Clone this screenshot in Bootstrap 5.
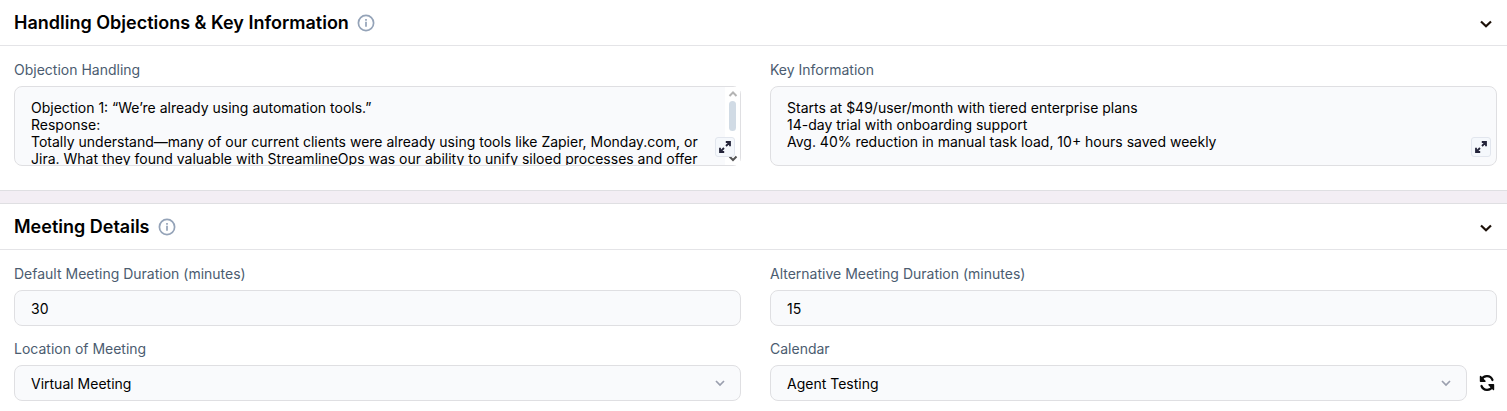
<!DOCTYPE html>
<html lang="en">
<head>
<meta charset="utf-8">
<meta name="viewport" content="width=device-width, initial-scale=1">
<title>Agent settings</title>
<link rel="stylesheet" href="https://cdn.jsdelivr.net/npm/bootstrap@5.3.0/dist/css/bootstrap.min.css">
<style>
  body { font-family: Inter, "Liberation Sans", sans-serif; font-size: 14px; line-height: 17px; color: #000; background: #fff; }
  .panel-head { height: 45px; padding: 0 14px; box-sizing: content-box; border-bottom: 1px solid #e4e4e7; }
  .panel-title { font-size: 18px; line-height: 24px; font-weight: 600; }
  .panel-body { padding: 15px 10px 24px 14px; }
  .divider-band { height: 14px; background: #f3eef4; border: solid #dfdfe2; border-width: 1px 0; }
  .fields { --bs-gutter-x: 29px; --bs-gutter-y: 14px; }
  .form-label { color: #4b5c70; margin-bottom: 8px; display: block; }
  .field { font-size: 14px; line-height: 17px; color: #000; background-color: #f9fafc; border: 1px solid #dfdfe2; border-radius: 8px; padding: 0 16px; height: 36px; }
  textarea.field { height: 80px; padding: 12px 16px; resize: none; overflow: hidden; display: block; }
  textarea.field.with-bar { padding-right: 31px; }
  select.field { background-image: none; }
  .select-caret { position: absolute; right: 15px; top: 12px; pointer-events: none; }
  .expand { position: absolute; right: 6px; bottom: 9px; width: 20px; height: 20px; background: #f5f8fc; border: 1px solid #e2e6ee; border-radius: 3px; z-index: 2; }
  .bar { position: absolute; right: 1px; top: 1px; bottom: 1px; width: 15px; background: #fff; }
  .bar-thumb { width: 7px; height: 30px; border-radius: 4px; background: #d1dbe5; }
  svg { display: block; }
</style>
</head>
<body>
<main>
  <section>
    <header class="panel-head d-flex align-items-center justify-content-between">
      <div class="d-flex align-items-center gap-2">
        <h2 class="panel-title mb-0">Handling Objections &amp; Key Information</h2>
        <button type="button" class="btn p-0 border-0" aria-label="About this section"><svg width="18" height="18" viewBox="0 0 18 18" fill="none" stroke="#94a3b8" stroke-width="1.7"><circle cx="9" cy="9" r="7.6"/><path d="M9 7.800v5M9 5v1.700"/></svg></button>
      </div>
      <button type="button" class="btn p-0 border-0" aria-label="Collapse section"><svg width="14" height="14" viewBox="0 0 14 14" fill="none" stroke="#1c1008" stroke-width="2.2"><path d="M2 5.500l5 4.800 5-4.800"/></svg></button>
    </header>
    <div class="panel-body">
      <div class="row fields">
        <div class="col-6">
          <label class="form-label" for="objections">Objection Handling</label>
          <div class="position-relative">
            <textarea id="objections" class="form-control field with-bar">Objection 1: “We’re already using automation tools.”
Response:
Totally understand—many of our current clients were already using tools like Zapier, Monday.com, or Jira. What they found valuable with StreamlineOps was our ability to unify siloed processes and offer</textarea>
            <div class="bar d-flex flex-column align-items-center justify-content-between" aria-hidden="true">
              <div class="d-flex flex-column align-items-center">
                <svg width="14" height="14" viewBox="0 0 14 14" fill="none" stroke="#b4b4b4" stroke-width="2"><path d="M3.500 9L7 5.500 10.500 9"/></svg>
                <div class="bar-thumb"></div>
              </div>
              <svg width="14" height="14" viewBox="0 0 14 14" fill="none" stroke="#555" stroke-width="2"><path d="M3.500 5.500L7 9l3.500-3.500"/></svg>
            </div>
            <button type="button" class="expand btn p-0 d-flex align-items-center justify-content-center" aria-label="Expand objection handling"><svg width="14" height="14" viewBox="0 0 14 14" fill="none" stroke="#24243a" stroke-width="1.8"><path d="M7.800 2H12v4.200M12 2L8 6M6.200 12H2V7.800M2 12l4-4"/></svg></button>
          </div>
        </div>
        <div class="col-6">
          <label class="form-label" for="keyinfo">Key Information</label>
          <div class="position-relative">
            <textarea id="keyinfo" class="form-control field">Starts at $49/user/month with tiered enterprise plans
14-day trial with onboarding support
Avg. 40% reduction in manual task load, 10+ hours saved weekly</textarea>
            <button type="button" class="expand btn p-0 d-flex align-items-center justify-content-center" aria-label="Expand key information"><svg width="14" height="14" viewBox="0 0 14 14" fill="none" stroke="#24243a" stroke-width="1.8"><path d="M7.800 2H12v4.200M12 2L8 6M6.200 12H2V7.800M2 12l4-4"/></svg></button>
          </div>
        </div>
      </div>
    </div>
  </section>
  <div class="divider-band"></div>
  <section>
    <header class="panel-head d-flex align-items-center justify-content-between">
      <div class="d-flex align-items-center gap-2">
        <h2 class="panel-title mb-0">Meeting Details</h2>
        <button type="button" class="btn p-0 border-0" aria-label="About this section"><svg width="18" height="18" viewBox="0 0 18 18" fill="none" stroke="#94a3b8" stroke-width="1.7"><circle cx="9" cy="9" r="7.6"/><path d="M9 7.800v5M9 5v1.700"/></svg></button>
      </div>
      <button type="button" class="btn p-0 border-0" aria-label="Collapse section"><svg width="14" height="14" viewBox="0 0 14 14" fill="none" stroke="#1c1008" stroke-width="2.2"><path d="M2 5.500l5 4.800 5-4.800"/></svg></button>
    </header>
    <div class="panel-body pb-0">
      <div class="row fields">
        <div class="col-6">
          <label class="form-label" for="duration">Default Meeting Duration (minutes)</label>
          <input id="duration" type="text" class="form-control field" value="30">
        </div>
        <div class="col-6">
          <label class="form-label" for="altduration">Alternative Meeting Duration (minutes)</label>
          <input id="altduration" type="text" class="form-control field" value="15">
        </div>
        <div class="col-6">
          <label class="form-label" for="location">Location of Meeting</label>
          <div class="position-relative">
            <select id="location" class="form-select field"><option>Virtual Meeting</option></select>
            <svg class="select-caret" width="12" height="12" viewBox="0 0 12 12" fill="none" stroke="#9a9fae" stroke-width="1.7"><path d="M2 4l4 4 4-4"/></svg>
          </div>
        </div>
        <div class="col-6">
          <label class="form-label" for="calendar">Calendar</label>
          <div class="d-flex align-items-center">
            <div class="position-relative flex-grow-1">
              <select id="calendar" class="form-select field"><option>Agent Testing</option></select>
              <svg class="select-caret" width="12" height="12" viewBox="0 0 12 12" fill="none" stroke="#9a9fae" stroke-width="1.7"><path d="M2 4l4 4 4-4"/></svg>
            </div>
            <button type="button" class="btn p-0 border-0 ms-2" aria-label="Refresh calendars"><svg width="22" height="22" viewBox="0 0 22 22" fill="none" stroke="#0c0c0c" stroke-width="2.2" stroke-linecap="round"><path d="M6.500 7.500A6 6 0 0 1 17.500 8M17.500 14.500A6 6 0 0 1 6.500 14"/><path d="M5.500 4.500v4.800h4.500z M18.500 17.500v-4.800H14z" fill="#0c0c0c" stroke-width="1.4" stroke-linejoin="round"/></svg></button>
          </div>
        </div>
      </div>
    </div>
  </section>
</main>
<script src="https://cdn.jsdelivr.net/npm/bootstrap@5.3.0/dist/js/bootstrap.bundle.min.js"></script>
</body>
</html>
